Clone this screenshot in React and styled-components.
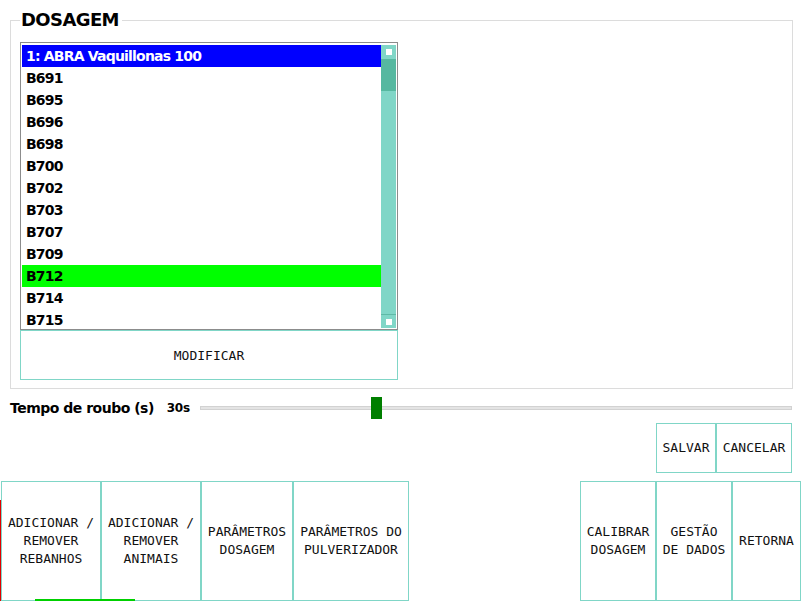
import React from 'react';
import styled, { createGlobalStyle } from 'styled-components';

const GlobalStyle = createGlobalStyle`
  html, body {
    margin: 0;
    padding: 0;
    background: #ffffff;
  }
  * {
    box-sizing: border-box;
  }
`;

const TURQ = '#80d6c7';

const rebanhos = [
  '1: ABRA Vaquillonas 100',
  'B691',
  'B695',
  'B696',
  'B698',
  'B700',
  'B702',
  'B703',
  'B707',
  'B709',
  'B712',
  'B714',
  'B715',
];

const bottomLeft = [
  { w: 100, label: 'ADICIONAR /\nREMOVER\nREBANHOS' },
  { w: 100, label: 'ADICIONAR /\nREMOVER\nANIMAIS' },
  { w: 92, label: 'PARÂMETROS\nDOSAGEM' },
  { w: 116, label: 'PARÂMETROS DO\nPULVERIZADOR' },
];

const bottomRight = [
  { w: 76, label: 'CALIBRAR\nDOSAGEM' },
  { w: 76, label: 'GESTÃO\nDE DADOS' },
  { w: 69, label: 'RETORNA' },
];

function App() {
  return (
    <>
      <GlobalStyle />
      <Screen>
        <Dosagem>
          <Legenda>DOSAGEM</Legenda>
          <ListaColuna>
            <ListaBox>
              <ListaItens>
                {rebanhos.map((r, i) => (
                  <Item key={r} $state={i === 0 ? 'sel' : r === 'B712' ? 'ativo' : ''}>
                    {r}
                  </Item>
                ))}
              </ListaItens>
              <Scroll>
                <ScrollBtn>
                  <ScrollDot />
                </ScrollBtn>
                <ScrollTrack>
                  <ScrollThumb />
                </ScrollTrack>
                <ScrollBtn $bottom>
                  <ScrollDot />
                </ScrollBtn>
              </Scroll>
            </ListaBox>
            <Modificar>MODIFICAR</Modificar>
          </ListaColuna>
        </Dosagem>

        <SliderRow>
          <SliderLabel>Tempo de roubo (s)</SliderLabel>
          <SliderValue>30s</SliderValue>
          <Track>
            <Thumb style={{ left: `${(30 / 100) * 100}%` }} />
          </Track>
        </SliderRow>

        <AcoesRow>
          <Botao $w={60} $h={50}>SALVAR</Botao>
          <Botao $w={76} $h={50}>CANCELAR</Botao>
        </AcoesRow>

        <BottomBar>
          <Grupo>
            {bottomLeft.map((b) => (
              <Botao key={b.label} $w={b.w} $h={120}>
                {b.label}
              </Botao>
            ))}
          </Grupo>
          <Grupo>
            {bottomRight.map((b) => (
              <Botao key={b.label} $w={b.w} $h={120}>
                {b.label}
              </Botao>
            ))}
          </Grupo>
        </BottomBar>

        <FundoVermelho />
        <FundoVerde />
      </Screen>
    </>
  );
}

export default App;

export const Screen = styled.div`
  position: relative;
  width: 803px;
  height: 601px;
  overflow: hidden;
  background: #ffffff;
  display: flex;
  flex-direction: column;
`;

export const Dosagem = styled.fieldset`
  margin: 9px 10px 0 10px;
  padding: 11px 9px 0 9px;
  height: 380px;
  border: 1px solid #dcdcdc;
  min-width: 0;
`;

export const Legenda = styled.legend`
  padding: 0 3px 0 1px;
  font-family: 'DejaVu Sans', sans-serif;
  font-weight: bold;
  font-size: 18px;
  letter-spacing: -0.6px;
  line-height: 22px;
  color: #000;
`;

export const ListaColuna = styled.div`
  width: 378px;
  display: flex;
  flex-direction: column;
`;

export const ListaBox = styled.div`
  height: 288px;
  border: 1px solid #8c8c8c;
  padding: 2px 1px 1px 1px;
  display: flex;
  overflow: hidden;
`;

export const ListaItens = styled.div`
  flex: 1;
  overflow: hidden;
`;

export const Item = styled.div`
  height: 22px;
  line-height: 22px;
  padding-left: 4px;
  font-family: 'DejaVu Sans', sans-serif;
  font-weight: bold;
  font-size: 14px;
  letter-spacing: -0.8px;
  white-space: nowrap;
  color: ${(p) => (p.$state === 'sel' ? '#ffffff' : '#000000')};
  background: ${(p) =>
    p.$state === 'sel' ? '#0000ff' : p.$state === 'ativo' ? '#00ff00' : 'transparent'};
`;

export const Scroll = styled.div`
  width: 15px;
  display: flex;
  flex-direction: column;
  background: ${TURQ};
`;

export const ScrollBtn = styled.div`
  height: 14px;
  display: flex;
  align-items: center;
  justify-content: center;
  border-top: ${(p) => (p.$bottom ? '1px solid #5fb9a6' : 'none')};
`;

export const ScrollDot = styled.div`
  width: 6px;
  height: 6px;
  background: #ffffff;
`;

export const ScrollTrack = styled.div`
  flex: 1;
`;

export const ScrollThumb = styled.div`
  height: 32px;
  background: #56b8a0;
`;

export const Modificar = styled.div`
  height: 50px;
  border: 1px solid ${TURQ};
  display: flex;
  align-items: center;
  justify-content: center;
  font-family: 'DejaVu Sans Mono', monospace;
  font-size: 13px;
  color: #111;
`;

export const SliderRow = styled.div`
  height: 34px;
  margin-top: 2px;
  display: flex;
  align-items: center;
  padding: 0 11px 0 10px;
`;

export const SliderLabel = styled.span`
  font-family: 'DejaVu Sans', sans-serif;
  font-weight: bold;
  font-size: 14px;
  letter-spacing: -0.5px;
  color: #000;
  margin-right: 13px;
`;

export const SliderValue = styled.span`
  font-family: 'DejaVu Sans', sans-serif;
  font-weight: bold;
  font-size: 12px;
  letter-spacing: -0.3px;
  color: #000;
  width: 33px;
`;

export const Track = styled.div`
  position: relative;
  flex: 1;
  height: 4px;
  background: #e4e4e4;
  border: 1px solid #d2d2d2;
`;

export const Thumb = styled.div`
  position: absolute;
  top: -10px;
  width: 11px;
  height: 22px;
  margin-left: -7px;
  background: #007f00;
`;

export const AcoesRow = styled.div`
  display: flex;
  justify-content: flex-end;
  padding-right: 11px;
  margin-top: -2px;
`;

export const Botao = styled.div`
  width: ${(p) => p.$w}px;
  height: ${(p) => p.$h}px;
  border: 1px solid ${TURQ};
  display: flex;
  align-items: center;
  justify-content: center;
  text-align: center;
  white-space: pre-line;
  font-family: 'DejaVu Sans Mono', monospace;
  font-size: 13px;
  line-height: 18px;
  color: #111;
  background: #ffffff;
`;

export const BottomBar = styled.div`
  margin-top: 8px;
  display: flex;
  justify-content: space-between;
  padding: 0 2px 0 1px;
`;

export const Grupo = styled.div`
  display: flex;
`;

export const FundoVermelho = styled.div`
  position: absolute;
  left: 0;
  top: 500px;
  width: 1px;
  height: 101px;
  background: #e00000;
`;

export const FundoVerde = styled.div`
  position: absolute;
  left: 35px;
  bottom: 0;
  width: 100px;
  height: 2px;
  background: #00d000;
`;
